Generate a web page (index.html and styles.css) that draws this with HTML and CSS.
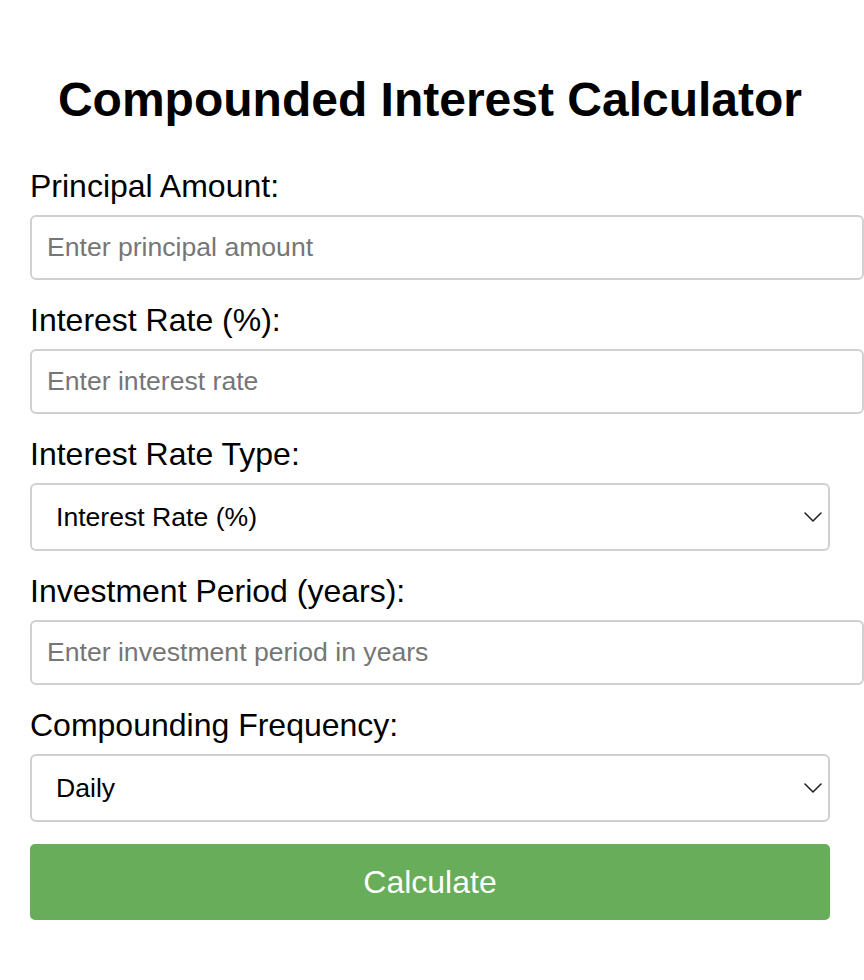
FILE: index.html
```html
<!DOCTYPE html>
<html lang="en">
<head>
<meta charset="utf-8">
<title>Compounded Interest Calculator</title>
<link rel="stylesheet" href="styles.css">
</head>
<body>
<div class="container">
  <h1 class="title">Compounded Interest Calculator</h1>
  <form class="calc-form">
    <label class="field-label" for="principal">Principal Amount:</label>
    <input class="text-input" type="number" id="principal" placeholder="Enter principal amount">

    <label class="field-label" for="rate">Interest Rate (%):</label>
    <input class="text-input" type="number" id="rate" placeholder="Enter interest rate">

    <label class="field-label" for="rateType">Interest Rate Type:</label>
    <div class="select-wrap">
      <select class="select-input" id="rateType">
        <option>Interest Rate (%)</option>
      </select>
      <svg class="chevron" width="18" height="10" viewBox="0 0 18 10"><path d="M1 1 L9 9 L17 1" fill="none" stroke="#222" stroke-width="1.6" stroke-linecap="round" stroke-linejoin="round"/></svg>
    </div>

    <label class="field-label" for="years">Investment Period (years):</label>
    <input class="text-input" type="number" id="years" placeholder="Enter investment period in years">

    <label class="field-label" for="freq">Compounding Frequency:</label>
    <div class="select-wrap">
      <select class="select-input" id="freq">
        <option>Daily</option>
      </select>
      <svg class="chevron" width="18" height="10" viewBox="0 0 18 10"><path d="M1 1 L9 9 L17 1" fill="none" stroke="#222" stroke-width="1.6" stroke-linecap="round" stroke-linejoin="round"/></svg>
    </div>

    <button class="calc-button" type="button">Calculate</button>
  </form>
</div>
</body>
</html>
```
FILE: styles.css
```css
html, body {
  margin: 0;
  padding: 0;
  background: #ffffff;
}

body {
  font-family: "Liberation Sans", Arial, Helvetica, sans-serif;
  color: #000;
}

.container {
  width: 800px;
  margin-left: 30px;
  padding-top: 72px;
}

.title {
  margin: 0 0 41px 0;
  font-size: 48px;
  line-height: 55px;
  font-weight: bold;
  text-align: center;
}

.calc-form {
  display: block;
}

.field-label {
  display: block;
  font-size: 32px;
  line-height: 37px;
  margin-bottom: 10px;
}

.text-input {
  display: block;
  box-sizing: content-box;
  width: 100%;
  height: 31px;
  padding: 15px;
  margin: 0 0 22px 0;
  border: 2px solid #d0d0d0;
  border-radius: 6px;
  font-family: inherit;
  font-size: 26.6px;
  line-height: 31px;
  color: #000;
  background: #fff;
  outline: none;
  -moz-appearance: textfield;
}

.text-input::-webkit-outer-spin-button,
.text-input::-webkit-inner-spin-button {
  -webkit-appearance: none;
  margin: 0;
}

.text-input::placeholder {
  color: #767676;
}

.select-wrap {
  position: relative;
  margin-bottom: 22px;
}

.select-input {
  display: block;
  box-sizing: border-box;
  width: 100%;
  height: 68px;
  padding: 0 50px 0 24px;
  border: 2px solid #d0d0d0;
  border-radius: 6px;
  font-family: inherit;
  font-size: 26.6px;
  color: #000;
  background: #fff;
  -webkit-appearance: none;
  appearance: none;
  outline: none;
}

.chevron {
  position: absolute;
  right: 8px;
  top: 29px;
  pointer-events: none;
}

.calc-button {
  display: block;
  box-sizing: border-box;
  width: 100%;
  height: 76px;
  border: none;
  border-radius: 5px;
  background: #67ad5a;
  color: #fff;
  font-family: inherit;
  font-size: 32px;
  line-height: 37px;
  cursor: pointer;
}
```
